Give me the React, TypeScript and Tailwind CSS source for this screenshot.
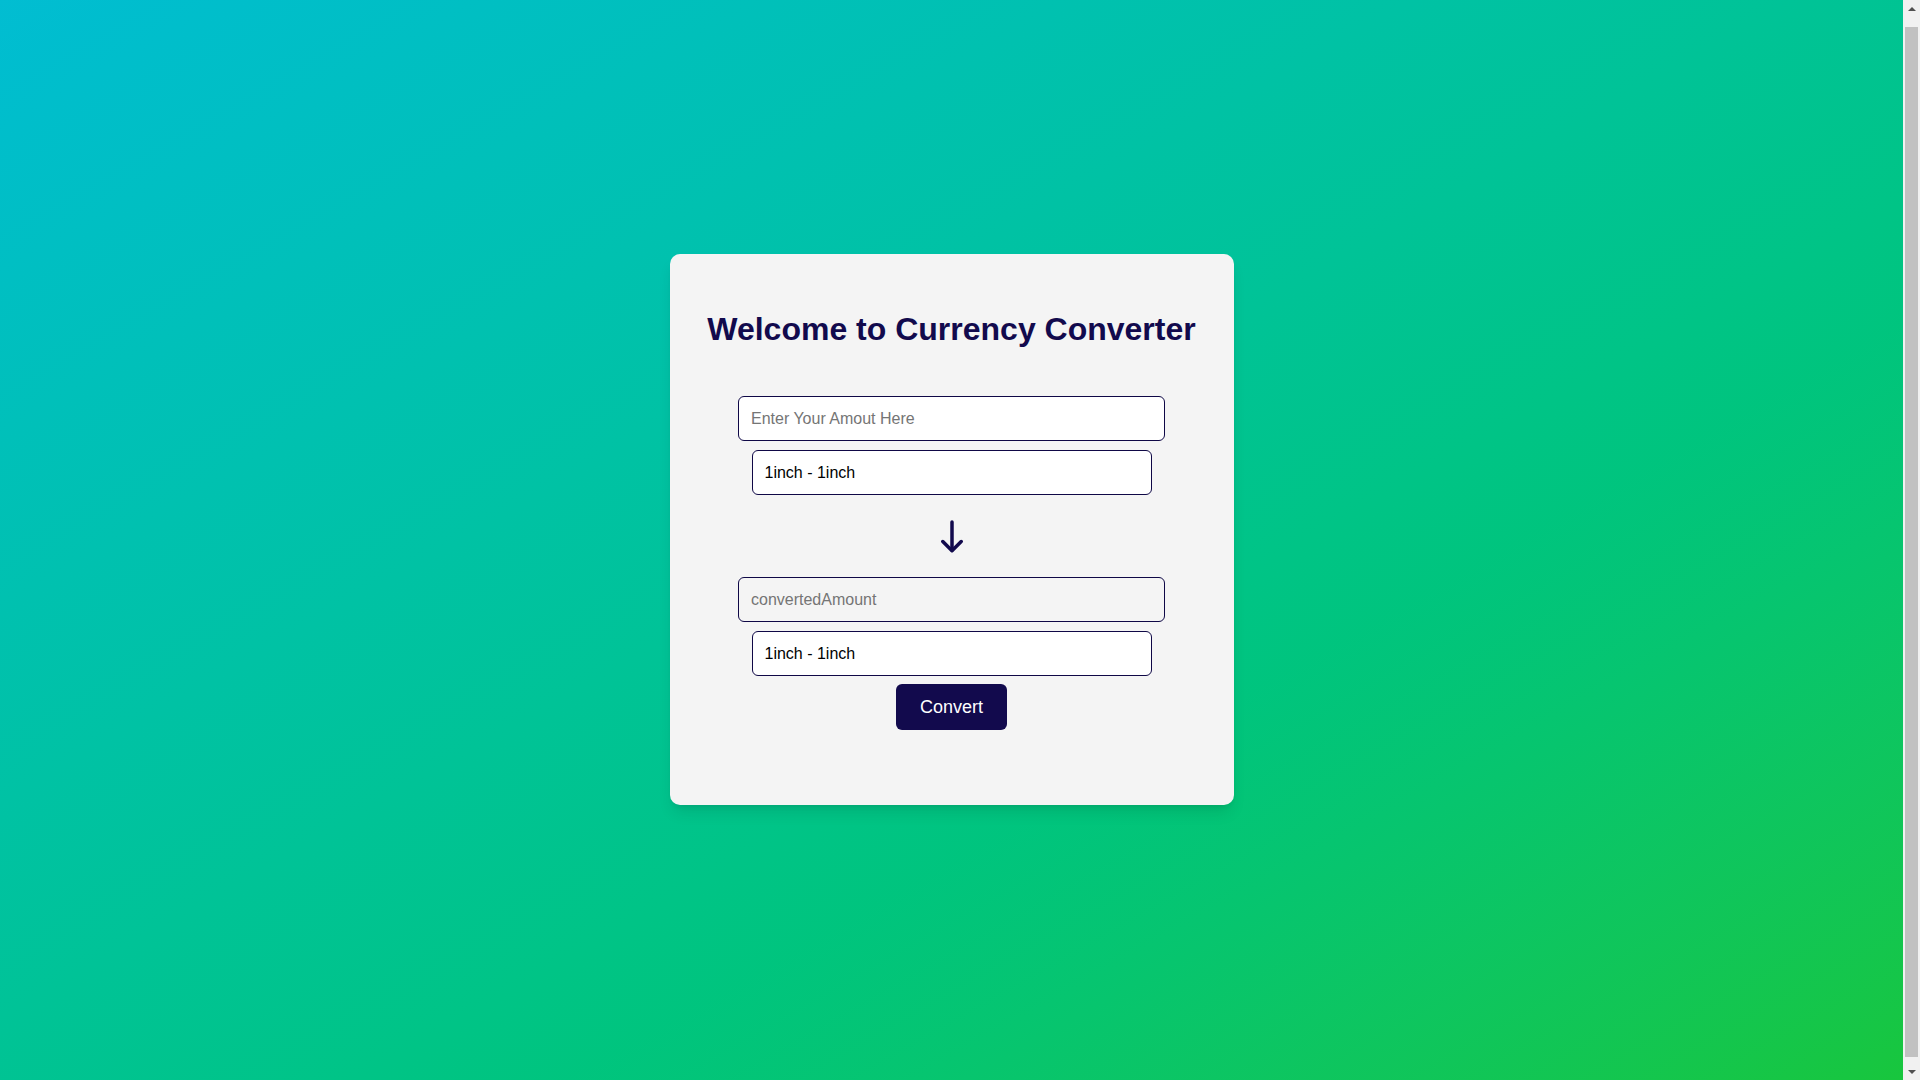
const CURRENCY_OPTIONS = ["1inch - 1inch", "aave - Aave", "ada - Cardano", "usd - US Dollar"];

function ArrowDown() {
  return (
    <svg width="24" height="33" viewBox="0 0 24 33" fill="none" aria-hidden="true">
      <path d="M12 2v28" stroke="currentColor" strokeWidth="3.5" strokeLinecap="round" />
      <path d="m2.8 21.5 9.2 9.2 9.2-9.2" stroke="currentColor" strokeWidth="3.5" strokeLinecap="round" strokeLinejoin="round" />
    </svg>
  );
}

function CurrencySelect() {
  return (
    <select className="h-[45px] w-[400px] appearance-none rounded-md border border-[#0f0846] bg-white px-3 text-base text-black outline-none">
      {CURRENCY_OPTIONS.map((option) => (
        <option key={option}>{option}</option>
      ))}
    </select>
  );
}

// the browser's vertical scrollbar, as it shows in the screenshot
function Scrollbar() {
  return (
    <div className="flex h-screen w-[17px] shrink-0 flex-col items-center bg-[#f1f1f1]">
      <div className="flex h-[17px] items-center justify-center">
        <div className="h-0 w-0 border-x-[4px] border-b-[4px] border-x-transparent border-b-[#505050]" />
      </div>
      <div className="mt-[10px] mb-[6px] w-[13px] flex-1 bg-[#c1c1c1]" />
      <div className="flex h-[17px] items-center justify-center">
        <div className="h-0 w-0 border-x-[4px] border-t-[4px] border-x-transparent border-t-[#505050]" />
      </div>
    </div>
  );
}

export default function App() {
  return (
    <div className="flex h-screen overflow-hidden" style={{ fontFamily: '"Liberation Sans", Arial, sans-serif' }}>
      <main className="flex flex-1 flex-col items-center bg-gradient-to-br from-[#02bdd2] to-[#18c63d] pt-[254px]">
        <div className="flex h-[551px] w-[564px] flex-col items-center rounded-[10px] bg-[#f4f4f4] pt-[57px] shadow-lg">
          <h1 className="text-[32px] leading-[36px] font-bold text-[#120a4d]">
            Welcome to Currency Converter
          </h1>

          <div className="mt-[49px] flex flex-col items-center gap-[9px]">
            <input
              type="number"
              placeholder="Enter Your Amout Here"
              className="h-[45px] w-[427px] rounded-md border border-[#0f0846] bg-white px-3 text-base text-black outline-none placeholder:text-[#757575]"
            />
            <CurrencySelect />
          </div>

          <div className="mt-[25px] mb-[24px] flex h-[33px] items-center text-[#120a4d]">
            <ArrowDown />
          </div>

          <div className="flex flex-col items-center gap-[9px]">
            <input
              type="text"
              readOnly
              placeholder="convertedAmount"
              className="h-[45px] w-[427px] rounded-md border border-[#0f0846] bg-transparent px-3 text-base text-black outline-none placeholder:text-[#757575]"
            />
            <CurrencySelect />
            <button className="-mt-px h-[46px] rounded-md bg-[#120a4d] px-6 text-lg text-white">
              Convert
            </button>
          </div>
        </div>
      </main>
      <Scrollbar />
    </div>
  );
}
